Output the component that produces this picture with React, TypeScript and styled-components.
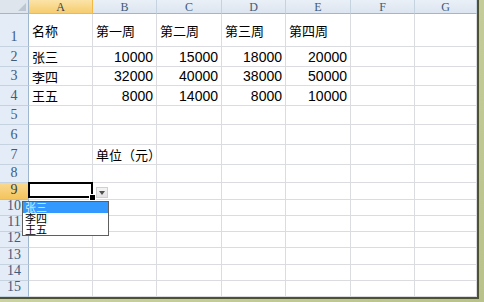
import React from 'react';
import styled, { createGlobalStyle } from 'styled-components';

const GlobalStyle = createGlobalStyle`
  html, body {
    margin: 0;
    padding: 0;
    background: #ffffff;
  }
`;

const COLS = [29, 64, 64, 65, 64, 65, 64, 62];
const ROWS = [14, 33, 20, 19, 20, 19, 20, 20, 18, 17, 16, 16, 16, 17, 16, 16];
const LETTERS = ['A', 'B', 'C', 'D', 'E', 'F', 'G'];

type CellData = { text: string; num?: boolean };

// row number -> cells for columns A..G
const DATA: Record<number, CellData[]> = {
  1: [{ text: '名称' }, { text: '第一周' }, { text: '第二周' }, { text: '第三周' }, { text: '第四周' }],
  2: [{ text: '张三' }, { text: '10000', num: true }, { text: '15000', num: true }, { text: '18000', num: true }, { text: '20000', num: true }],
  3: [{ text: '李四' }, { text: '32000', num: true }, { text: '40000', num: true }, { text: '38000', num: true }, { text: '50000', num: true }],
  4: [{ text: '王五' }, { text: '8000', num: true }, { text: '14000', num: true }, { text: '8000', num: true }, { text: '10000', num: true }],
  7: [{ text: '' }, { text: '单位（元）' }],
};

const OPTIONS = ['张三', '李四', '王五'];

const Frame = styled.div`
  width: 484px;
  height: 302px;
  background: linear-gradient(135deg, #d6dcb2, #b9c28a);
  overflow: hidden;
`;

const Sheet = styled.div`
  display: grid;
  grid-template-columns: ${COLS.map((c) => `${c}px`).join(' ')};
  grid-template-rows: ${ROWS.map((r) => `${r}px`).join(' ')};
  width: max-content;
  background: #ffffff;
  border-right: 2px solid #4d5233;
  border-bottom: 2px solid #4d5233;
`;

const Corner = styled.div`
  position: relative;
  background: #dfe5ec;
  border-right: 1px solid #9eb6ce;
  border-bottom: 1px solid #9eb6ce;
  box-sizing: border-box;
  &::after {
    content: '';
    position: absolute;
    right: 2px;
    bottom: 2px;
    border-style: solid;
    border-width: 0 0 8px 8px;
    border-color: transparent transparent #bcc6d2 transparent;
  }
`;

const ColHeader = styled.div<{ $active?: boolean }>`
  display: flex;
  align-items: center;
  justify-content: center;
  box-sizing: border-box;
  border-right: 1px solid ${(p) => (p.$active ? '#f2b944' : '#c5d2e0')};
  border-bottom: 1px solid ${(p) => (p.$active ? '#f2b944' : '#9eb6ce')};
  background: ${(p) =>
    p.$active ? 'linear-gradient(#fbe3a8, #f6cd6f)' : 'linear-gradient(#eaf0f7, #dce5f0)'};
  color: ${(p) => (p.$active ? '#35404e' : '#3f5a7a')};
  font-family: 'Liberation Serif', 'DejaVu Serif', serif;
  font-size: 12px;
  line-height: 1;
`;

const RowHeader = styled.div<{ $active?: boolean }>`
  display: flex;
  align-items: flex-end;
  justify-content: center;
  padding-bottom: 2px;
  box-sizing: border-box;
  border-right: 1px solid #9eb6ce;
  border-bottom: 1px solid ${(p) => (p.$active ? '#f2b944' : '#c5d2e0')};
  background: ${(p) => (p.$active ? 'linear-gradient(#f9d98f, #f4c45e)' : '#e4ecf7')};
  color: ${(p) => (p.$active ? '#35404e' : '#3f5a7a')};
  font-family: 'Liberation Serif', 'DejaVu Serif', serif;
  font-size: 14px;
  line-height: 1;
`;

const Cell = styled.div<{ $num?: boolean }>`
  position: relative;
  display: flex;
  align-items: center;
  justify-content: ${(p) => (p.$num ? 'flex-end' : 'flex-start')};
  padding: 0 3px;
  box-sizing: border-box;
  border-right: 1px solid #dadcdf;
  border-bottom: 1px solid #dadcdf;
  color: #000000;
  font-family: ${(p) =>
    p.$num
      ? "'Liberation Sans', Arial, sans-serif"
      : "'Noto Sans CJK SC', 'Liberation Sans', sans-serif"};
  font-size: ${(p) => (p.$num ? '14px' : '13px')};
  line-height: 1;
  white-space: nowrap;
`;

const Selection = styled.div`
  position: absolute;
  left: -1px;
  top: -1px;
  width: 65px;
  height: 16px;
  box-sizing: border-box;
  border: 2px solid #000000;
  z-index: 2;
`;

const FillHandle = styled.div`
  position: absolute;
  left: 60px;
  top: 11px;
  width: 5px;
  height: 5px;
  background: #000000;
  border: 1px solid #ffffff;
  z-index: 3;
`;

const DropButton = styled.div`
  position: absolute;
  left: 67px;
  top: 4px;
  width: 12px;
  height: 11px;
  box-sizing: border-box;
  background: linear-gradient(#f4f4f4, #e2e2e2);
  border: 1px solid #d0d0d0;
  display: flex;
  align-items: center;
  justify-content: center;
  z-index: 2;
  &::after {
    content: '';
    border-style: solid;
    border-width: 4px 3px 0 3px;
    border-color: #505050 transparent transparent transparent;
  }
`;

const DropList = styled.div`
  position: absolute;
  left: -7px;
  top: 18px;
  width: 87px;
  height: 35px;
  box-sizing: border-box;
  background: #ffffff;
  border: 1px solid #5f5f5f;
  display: flex;
  flex-direction: column;
  z-index: 4;
`;

const DropItem = styled.div<{ $selected?: boolean }>`
  height: 11px;
  padding-left: 2px;
  display: flex;
  align-items: center;
  background: ${(p) => (p.$selected ? '#3399ff' : 'transparent')};
  color: ${(p) => (p.$selected ? '#d8ecff' : '#000000')};
  font-family: 'Noto Sans CJK SC', sans-serif;
  font-size: 11px;
  line-height: 11px;
`;

export default function App() {
  return (
    <>
      <GlobalStyle />
      <Frame>
        <Sheet>
          <Corner />
          {LETTERS.map((l) => (
            <ColHeader key={l} $active={l === 'A'}>
              {l}
            </ColHeader>
          ))}
          {ROWS.slice(1).map((_, i) => {
            const r = i + 1;
            const cells = DATA[r] || [];
            return (
              <React.Fragment key={r}>
                <RowHeader $active={r === 9}>{r}</RowHeader>
                {LETTERS.map((l, c) => {
                  const d = cells[c];
                  return (
                    <Cell key={l} $num={d?.num}>
                      {d?.text}
                      {r === 9 && c === 0 && (
                        <>
                          <Selection />
                          <FillHandle />
                          <DropButton />
                          <DropList>
                            {OPTIONS.map((o, k) => (
                              <DropItem key={o} $selected={k === 0}>
                                {o}
                              </DropItem>
                            ))}
                          </DropList>
                        </>
                      )}
                    </Cell>
                  );
                })}
              </React.Fragment>
            );
          })}
        </Sheet>
      </Frame>
    </>
  );
}
